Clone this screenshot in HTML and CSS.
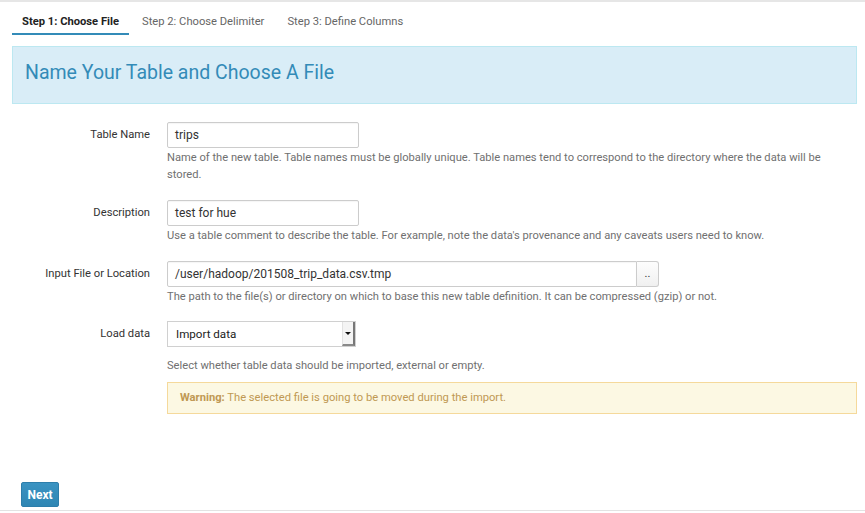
FILE: index.html
```html
<!DOCTYPE html>
<html>
<head>
<meta charset="utf-8">
<link rel="stylesheet" href="styles.css">
</head>
<body>
<div class="page">
  <div class="tabs">
    <div class="tab active">Step 1: Choose File</div>
    <div class="tab">Step 2: Choose Delimiter</div>
    <div class="tab">Step 3: Define Columns</div>
  </div>
  <div class="banner"><h1>Name Your Table and Choose A File</h1></div>
  <form class="form">
    <div class="row">
      <label class="label">Table Name</label>
      <div class="field">
        <div class="input short">trips</div>
        <p class="help">Name of the new table. Table names must be globally unique. Table names tend to correspond to the directory where the data will be stored.</p>
      </div>
    </div>
    <div class="row">
      <label class="label">Description</label>
      <div class="field">
        <div class="input short">test for hue</div>
        <p class="help">Use a table comment to describe the table. For example, note the data's provenance and any caveats users need to know.</p>
      </div>
    </div>
    <div class="row tight">
      <label class="label">Input File or Location</label>
      <div class="field">
        <div class="group">
          <div class="input long">/user/hadoop/201508_trip_data.csv.tmp</div>
          <div class="addon">..</div>
        </div>
        <p class="help">The path to the file(s) or directory on which to base this new table definition. It can be compressed (gzip) or not.</p>
      </div>
    </div>
    <div class="row last">
      <label class="label">Load data</label>
      <div class="field">
        <div class="select"><span class="sel-text">Import data</span><span class="sel-arrow"><span class="tri"></span></span></div>
        <p class="help spaced">Select whether table data should be imported, external or empty.</p>
        <div class="warning"><b>Warning:</b> The selected file is going to be moved during the import.</div>
      </div>
    </div>
  </form>
  <div class="footer">
    <button class="btn" type="button">Next</button>
  </div>
</div>
</body>
</html>
```
FILE: styles.css
```css
* { box-sizing: border-box; }
html, body { margin: 0; padding: 0; background: #fff; }
body {
  font-family: Roboto, "Liberation Sans", Arial, sans-serif;
  font-size: 11.3px;
  color: #333;
}
.page {
  width: 865px;
  height: 513px;
  border-top: 2px solid #e6e6e6;
  display: flex;
  flex-direction: column;
}
.tabs {
  display: flex;
  gap: 3px;
  padding-left: 12px;
  margin-top: 1px;
}
.tab {
  padding: 10px 10px 2px;
  line-height: 18px;
  color: #666;
  border-bottom: 2px solid transparent;
  font-size: 11.2px;
}
.tab.active {
  color: #222;
  font-weight: bold;
  border-bottom-color: #338bb8;
}
.banner {
  margin: 11px 8px 0 12px;
  height: 58px;
  background: #d9edf7;
  border: 1px solid #bce8f1;
  display: flex;
  align-items: center;
  padding: 0 0 5px 12px;
}
.banner h1 {
  margin: 0;
  font-weight: normal;
  font-size: 19.5px;
  color: #338bb8;
  line-height: 24px;
}
.form {
  margin: 18px 8px 0 0;
}
.row {
  display: grid;
  grid-template-columns: 150px 1fr;
  column-gap: 17px;
  margin-bottom: 17px;
}
.row.tight { margin-bottom: 16px; }
.row.last { margin-bottom: 0; }
.label {
  text-align: right;
  line-height: 26px;
  color: #333;
  font-size: 11.2px;
}
.input {
  height: 26px;
  border: 1px solid #ccc;
  border-radius: 2px;
  padding: 0 7px;
  line-height: 24px;
  color: #333;
  font-size: 12px;
  box-shadow: inset 0 1px 1px rgba(0,0,0,0.04);
  background: #fff;
}
.input.short { width: 192px; }
.group { display: flex; }
.input.long { width: 470px; border-radius: 2px 0 0 2px; }
.addon {
  width: 22px;
  height: 26px;
  border: 1px solid #ccc;
  border-left: none;
  border-radius: 0 3px 3px 0;
  background: linear-gradient(#fdfdfd, #f0f0f0);
  text-align: center;
  line-height: 24px;
  color: #333;
  font-size: 11px;
}
.help {
  margin: 1px 0 0;
  line-height: 17px;
  color: #707070;
  font-size: 11.15px;
}
.help.spaced { margin-top: 10px; }
.select {
  width: 189px;
  height: 26px;
  border: 1px solid #d0d0d0;
  display: flex;
  background: #fff;
}
.sel-text {
  flex: 1;
  padding-left: 8px;
  line-height: 24px;
  color: #222;
  font-size: 11.6px;
}
.sel-arrow {
  width: 13px;
  background: #f4f4f4;
  border-left: 1px solid #e2e2e2;
  border-right: 2px solid #777;
  border-bottom: 2px solid #8a8a8a;
  display: flex;
  align-items: center;
  justify-content: center;
}
.tri {
  width: 0;
  height: 0;
  border-left: 3px solid transparent;
  border-right: 3px solid transparent;
  border-top: 3px solid #111;
}
.warning {
  margin-top: 8px;
  height: 32px;
  background: #fcf8e3;
  border: 1px solid #f5d99b;
  color: #c09853;
  padding-left: 12px;
  line-height: 30px;
  font-size: 11.2px;
}
.warning b { font-weight: bold; }
.footer {
  margin-top: auto;
  padding: 0 0 3px 21px;
  border-bottom: 1px solid #e3e3e3;
  margin-bottom: 2px;
}
.btn {
  width: 38px;
  height: 25px;
  border: 1px solid #2d7eab;
  border-radius: 2px;
  background: linear-gradient(#3a93c2, #2f86b3);
  color: #fff;
  font-family: Roboto, "Liberation Sans", Arial, sans-serif;
  font-weight: bold;
  font-size: 12px;
  padding: 0;
  display: block;
}
```
